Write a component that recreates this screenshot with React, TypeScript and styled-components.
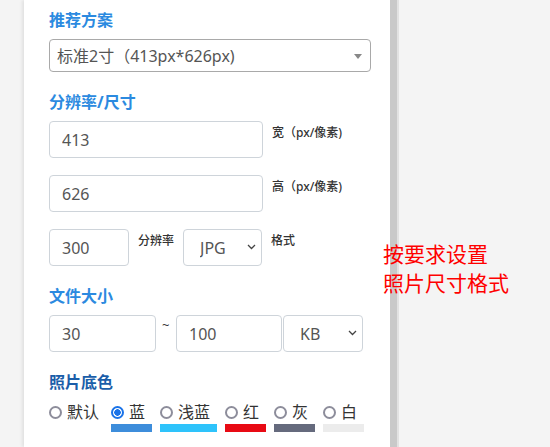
import styled, { createGlobalStyle } from 'styled-components';

const GlobalStyle = createGlobalStyle`
    html, body {
        margin: 0;
        padding: 0;
        background: #f4f4f4;
    }
    body {
        font-family: 'Noto Sans', 'Noto Sans CJK SC', sans-serif;
        overflow: hidden;
    }
`;

const colors = [
    { key: 'default', label: '默认' },
    { key: 'blue', label: '蓝', swatch: '#3d8ddb' },
    { key: 'lightblue', label: '浅蓝', swatch: '#2ec3fb' },
    { key: 'red', label: '红', swatch: '#e80a14' },
    { key: 'gray', label: '灰', swatch: '#656a7d' },
    { key: 'white', label: '白', swatch: '#ececec' },
];

const Chevron = () => (
    <svg width="9" height="6" viewBox="0 0 9 6">
        <path d="M1 1l3.5 3.5L8 1" fill="none" stroke="#444" strokeWidth="1.3" />
    </svg>
);

const App: React.FC = () => {
    return (
        <Page>
            <GlobalStyle />
            <Gutter />
            <Panel>
                <Section>
                    <Title>推荐方案</Title>
                    <PresetBox>
                        <PresetSelect defaultValue="2">
                            <option value="2">标准2寸（413px*626px)</option>
                        </PresetSelect>
                        <Caret />
                    </PresetBox>
                </Section>

                <Section>
                    <Title>分辨率/尺寸</Title>
                    <Stack>
                        <Row>
                            <Input $width={214} defaultValue="413" />
                            <Label>宽（px/像素)</Label>
                        </Row>
                        <Row>
                            <Input $width={214} defaultValue="626" />
                            <Label>高（px/像素)</Label>
                        </Row>
                        <Row>
                            <Input $width={80} defaultValue="300" />
                            <Label>分辨率</Label>
                            <SelectBox $width={79}>
                                <Select defaultValue="jpg">
                                    <option value="jpg">JPG</option>
                                </Select>
                                <ChevronSlot>
                                    <Chevron />
                                </ChevronSlot>
                            </SelectBox>
                            <Label>格式</Label>
                        </Row>
                    </Stack>
                </Section>

                <Section>
                    <Title>文件大小</Title>
                    <SizeRow>
                        <Input $width={107} defaultValue="30" />
                        <Tilde>~</Tilde>
                        <Input $width={106} defaultValue="100" />
                        <SelectBox $width={80}>
                            <Select defaultValue="kb">
                                <option value="kb">KB</option>
                            </Select>
                            <ChevronSlot>
                                <Chevron />
                            </ChevronSlot>
                        </SelectBox>
                    </SizeRow>
                </Section>

                <Section>
                    <Title $dark>照片底色</Title>
                    <ColorRow>
                        {colors.map((c) => (
                            <ColorItem key={c.key} $plain={!c.swatch}>
                                <ColorLabel>
                                    <Radio $checked={c.key === 'blue'} />
                                    {c.label}
                                </ColorLabel>
                                {c.swatch && <Swatch $color={c.swatch} />}
                            </ColorItem>
                        ))}
                    </ColorRow>
                </Section>
            </Panel>
            <Scrollbar />
            <Backdrop />
            <Note>
                按要求设置
                <br />
                照片尺寸格式
            </Note>
        </Page>
    );
};

export default App;

const Page = styled.div`
    position: relative;
    display: flex;
    height: 447px;
    overflow: hidden;
`;

const Gutter = styled.div`
    width: 24px;
    flex-shrink: 0;
    background: #f4f4f4;
`;

const Panel = styled.div`
    width: 341px;
    flex-shrink: 0;
    padding: 9px 0 0 25px;
    background: #fff;
    box-shadow: -2px 0 3px rgba(0, 0, 0, 0.08);
`;

const Scrollbar = styled.div`
    width: 7px;
    flex-shrink: 0;
    background: #c9c9c9;
    border-right: 2px solid #e2e2e2;
`;

const Backdrop = styled.div`
    flex-grow: 1;
    background: #f4f4f4;
`;

const Section = styled.div`
    margin-bottom: 19px;
`;

const Title = styled.div<{ $dark?: boolean }>`
    font-size: 16px;
    line-height: 22px;
    font-weight: 700;
    color: ${({ $dark }) => ($dark ? '#1b5ea9' : '#2b8ae0')};
    margin-bottom: 8px;
`;

const PresetBox = styled.div`
    position: relative;
    width: 322px;
    height: 33px;
`;

const PresetSelect = styled.select`
    appearance: none;
    width: 100%;
    height: 100%;
    box-sizing: border-box;
    border: 1px solid #a9a9a9;
    border-radius: 4px;
    background: #fff;
    padding: 0 24px 0 7px;
    font-family: inherit;
    font-size: 16px;
    color: #555;
    outline: none;
`;

const Caret = styled.span`
    position: absolute;
    right: 9px;
    top: 15px;
    width: 0;
    height: 0;
    border-left: 4px solid transparent;
    border-right: 4px solid transparent;
    border-top: 5px solid #888;
    pointer-events: none;
`;

const Stack = styled.div`
    display: flex;
    flex-direction: column;
    gap: 17px;
`;

const Row = styled.div`
    display: flex;
    align-items: flex-start;
    gap: 9px;
`;

const Input = styled.input<{ $width: number }>`
    width: ${({ $width }) => $width}px;
    height: 37px;
    box-sizing: border-box;
    border: 1px solid #ced4da;
    border-radius: 4px;
    padding: 0 12px;
    font-family: inherit;
    font-size: 16px;
    color: #555;
    outline: none;
`;

const Label = styled.span`
    font-size: 12px;
    line-height: 17px;
    font-weight: 500;
    color: #333;
    margin-top: 3px;
    white-space: nowrap;
`;

const SelectBox = styled.div<{ $width: number }>`
    position: relative;
    width: ${({ $width }) => $width}px;
    height: 37px;
    flex-shrink: 0;
`;

const Select = styled.select`
    appearance: none;
    width: 100%;
    height: 100%;
    box-sizing: border-box;
    border: 1px solid #ced4da;
    border-radius: 4px;
    background: #fff;
    padding: 0 0 0 16px;
    font-family: inherit;
    font-size: 16px;
    color: #555;
    outline: none;
`;

const ChevronSlot = styled.span`
    position: absolute;
    right: 6px;
    top: 15px;
    display: flex;
    pointer-events: none;
`;

const SizeRow = styled.div`
    display: flex;
    align-items: flex-start;
    gap: 1px;
`;

const Tilde = styled.span`
    width: 18px;
    padding-left: 5px;
    box-sizing: border-box;
    font-size: 13px;
    line-height: 20px;
    color: #333;
`;

const ColorRow = styled.div`
    display: flex;
    gap: 8px;
`;

const ColorItem = styled.div<{ $plain?: boolean }>`
    display: flex;
    flex-direction: column;
    padding-right: ${({ $plain }) => ($plain ? 4 : 7)}px;
`;

const ColorLabel = styled.span`
    display: flex;
    align-items: center;
    gap: 5px;
    font-size: 16px;
    line-height: 22px;
    color: #333;
    white-space: nowrap;
`;

const Radio = styled.span<{ $checked?: boolean }>`
    width: 13px;
    height: 13px;
    box-sizing: border-box;
    border-radius: 50%;
    border: 2px solid ${({ $checked }) => ($checked ? '#1a73e8' : '#8d8d9b')};
    background: ${({ $checked }) =>
        $checked ? 'radial-gradient(circle, #1a73e8 0 3px, #fff 3.5px)' : '#fff'};
    flex-shrink: 0;
`;

const Swatch = styled.span<{ $color: string }>`
    height: 8px;
    margin-top: 1px;
    margin-right: -7px;
    background: ${({ $color }) => $color};
`;

const Note = styled.div`
    position: absolute;
    left: 383px;
    top: 239px;
    font-size: 21px;
    line-height: 29px;
    color: #ff0000;
    font-family: 'Noto Sans CJK SC', sans-serif;
    white-space: nowrap;
`;
